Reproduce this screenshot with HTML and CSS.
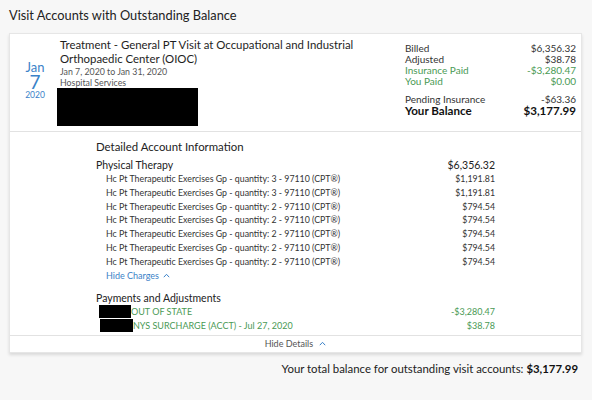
FILE: index.html
```html
<!DOCTYPE html>
<html>
<head>
<meta charset="utf-8">
<link rel="stylesheet" href="styles.css">
</head>
<body>
<div class="page">
  <h1 class="title">Visit Accounts with Outstanding Balance</h1>
  <div class="card">
    <div class="summary">
      <div class="date">
        <div class="month">Jan</div>
        <div class="day">7</div>
        <div class="year">2020</div>
      </div>
      <div class="info">
        <div class="visit">Treatment - General PT Visit at Occupational and Industrial Orthopaedic Center (OIOC)</div>
        <div class="sub">Jan 7, 2020 to Jan 31, 2020</div>
        <div class="sub">Hospital Services</div>
        <div class="redact big"></div>
      </div>
      <div class="totals">
        <div class="trow"><span>Billed</span><span>$6,356.32</span></div>
        <div class="trow"><span>Adjusted</span><span>$38.78</span></div>
        <div class="trow green"><span>Insurance Paid</span><span>-$3,280.47</span></div>
        <div class="trow green"><span>You Paid</span><span>$0.00</span></div>
        <div class="trow pending"><span>Pending Insurance</span><span>-$63.36</span></div>
        <div class="trow balance"><span>Your Balance</span><span>$3,177.99</span></div>
      </div>
    </div>
    <div class="details">
      <h2 class="dtitle">Detailed Account Information</h2>
      <div class="grow"><span>Physical Therapy</span><span>$6,356.32</span></div>
      <div class="crow"><span>Hc Pt Therapeutic Exercises Gp - quantity: 3 - 97110 (CPT®)</span><span>$1,191.81</span></div>
      <div class="crow"><span>Hc Pt Therapeutic Exercises Gp - quantity: 3 - 97110 (CPT®)</span><span>$1,191.81</span></div>
      <div class="crow"><span>Hc Pt Therapeutic Exercises Gp - quantity: 2 - 97110 (CPT®)</span><span>$794.54</span></div>
      <div class="crow"><span>Hc Pt Therapeutic Exercises Gp - quantity: 2 - 97110 (CPT®)</span><span>$794.54</span></div>
      <div class="crow"><span>Hc Pt Therapeutic Exercises Gp - quantity: 2 - 97110 (CPT®)</span><span>$794.54</span></div>
      <div class="crow"><span>Hc Pt Therapeutic Exercises Gp - quantity: 2 - 97110 (CPT®)</span><span>$794.54</span></div>
      <div class="crow"><span>Hc Pt Therapeutic Exercises Gp - quantity: 2 - 97110 (CPT®)</span><span>$794.54</span></div>
      <div class="link hidecharges">Hide Charges <svg class="chev" width="7" height="5" viewBox="0 0 7 5"><path d="M0.8 4.2 L3.5 1.3 L6.2 4.2" fill="none" stroke="currentColor" stroke-width="1"/></svg></div>
      <div class="grow payhead"><span>Payments and Adjustments</span></div>
      <div class="prow"><span class="pl"><span class="redact r1"></span>OUT OF STATE</span><span>-$3,280.47</span></div>
      <div class="prow"><span class="pl"><span class="redact r2"></span>NYS SURCHARGE (ACCT) - Jul 27, 2020</span><span>$38.78</span></div>
    </div>
    <div class="toggle">Hide Details <svg class="chev" width="7" height="5" viewBox="0 0 7 5"><path d="M0.8 4.2 L3.5 1.3 L6.2 4.2" fill="none" stroke="currentColor" stroke-width="1"/></svg></div>
  </div>
  <div class="grand">Your total balance for outstanding visit accounts: <b>$3,177.99</b></div>
</div>
</body>
</html>
```

FILE: styles.css
```css
* { box-sizing: border-box; }
body {
  margin: 0;
  background: #f7f7f7;
  font-family: Lato, "Liberation Sans", sans-serif;
  color: #222;
}
.page {
  padding: 5px 10px 0 9px;
}
.title {
  margin: 0;
  font-size: 12.8px;
  font-weight: 400;
  line-height: 20px;
  color: #222;
}
.card {
  margin-top: 8px;
  background: #fff;
  border: 1px solid #e6e6e6;
  box-shadow: 0 2px 3px rgba(0,0,0,0.12);
}
.summary {
  display: flex;
  height: 98px;
  border-bottom: 1px solid #e2e2e2;
}
.date {
  width: 50px;
  align-self: center;
  text-align: center;
  color: #3b82c8;
  margin-top: -5px;
}
.month { font-size: 13px; line-height: 13px; }
.day { font-size: 19px; line-height: 16px; }
.year { font-size: 8.5px; line-height: 10px; }
.info {
  flex: 1;
  padding-top: 4px;
}
.visit {
  font-size: 11.4px;
  line-height: 14px;
  width: 302px;
  color: #1e1e1e;
}
.sub {
  font-size: 8.8px;
  line-height: 11px;
  color: #555;
}
.redact { background: #000; display: inline-block; }
.big { width: 141px; height: 38px; margin-left: -3px; display: block; }
.totals {
  width: 171px;
  margin-right: 5px;
  padding-top: 9px;
  font-size: 10px;
  line-height: 11px;
}
.trow { display: flex; justify-content: space-between; color: #333; }
.green { color: #4a9a55; }
.pending { margin-top: 7px; }
.balance { font-size: 11.6px; font-weight: 700; line-height: 12px; color: #111; }
.details {
  padding: 7px 86px 2px 86px;
  border-bottom: 1px solid #e2e2e2;
}
.dtitle {
  margin: 0 0 4px;
  font-size: 11.4px;
  font-weight: 400;
  line-height: 16px;
  color: #222;
}
.grow {
  display: flex;
  justify-content: space-between;
  font-size: 10.5px;
  line-height: 13px;
  color: #222;
}
.crow {
  display: flex;
  justify-content: space-between;
  font-size: 8.8px;
  line-height: 13.8px;
  padding-left: 10px;
  color: #333;
}
.link {
  color: #3b82c8;
  font-size: 9px;
  line-height: 14px;
  padding-left: 10px;
}
.chev { vertical-align: 1px; margin-left: 2px; }
.payhead { margin-top: 9px; }
.prow {
  display: flex;
  justify-content: space-between;
  align-items: center;
  font-size: 9px;
  line-height: 14px;
  color: #4a9a55;
}
.pl { display: flex; align-items: center; }
.r1 { width: 32px; height: 13px; margin-left: 3px; }
.r2 { width: 33px; height: 13px; margin-left: 4px; }
.toggle {
  text-align: center;
  font-size: 9px;
  line-height: 16px;
  color: #555;
}
.toggle .chev { color: #3b82c8; margin-left: 4px; }
.grand {
  margin-top: 9px;
  text-align: right;
  padding-right: 4px;
  font-size: 11.4px;
  color: #222;
}
.grand b { font-weight: 700; color: #111; }
```
